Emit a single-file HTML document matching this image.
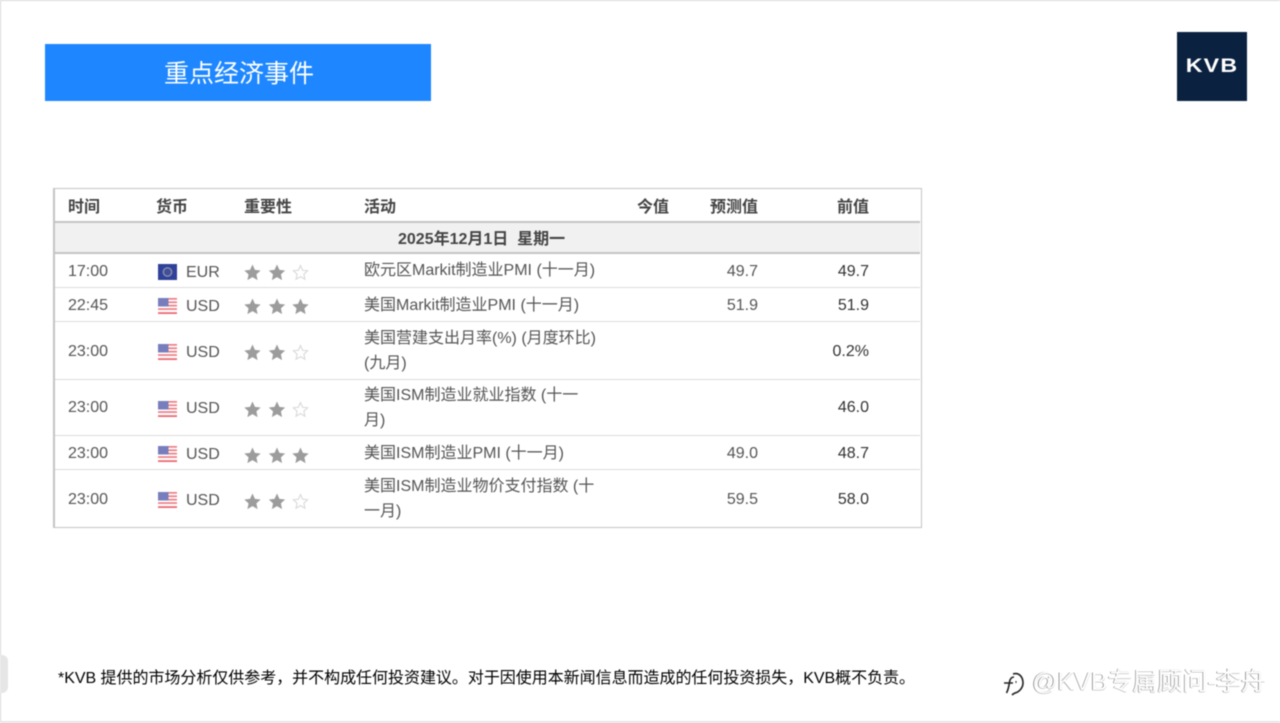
<!DOCTYPE html>
<html lang="zh"><head><meta charset="utf-8"><style>
html,body{margin:0;padding:0;background:#fff}
#p{position:relative;width:1280px;height:723px;overflow:hidden;background:#fff;font-family:"Liberation Sans","Noto Sans CJK SC",sans-serif;font-size:16px;color:#555;filter:blur(.4px)}
#p div,#p svg{position:absolute}
.t{white-space:nowrap;line-height:24px;height:24px}
.h{font-weight:bold;color:#444}
.r{text-align:right}
.l{left:55px;width:865px;height:1px;background:#dcdcdc}
.d{color:#333}
</style></head><body><div id="p">
<div style="left:0;top:0;width:1280px;height:1px;background:#d8d8d8"></div>
<div style="left:0;top:0;width:1px;height:721px;background:#d8d8d8"></div>
<div style="left:0;top:721px;width:1280px;height:2px;background:#e4e4e4"></div>
<div style="left:0;top:655px;width:8px;height:38px;background:#e6e6e6;border-radius:0 6px 6px 0"></div>

<div style="left:45px;top:44px;width:386px;height:57px;background:#1e87ff"></div>
<div class="t" style="left:164px;top:59px;height:30px;line-height:30px;font-size:25px;color:#fff">重点经济事件</div>

<div style="left:1177px;top:32px;width:70px;height:69px;background:#0b2140"></div>
<div class="t" style="left:1177px;top:55px;width:70px;text-align:center;font-size:19px;font-weight:bold;color:#fff;letter-spacing:1px;transform:scaleX(1.22)">KVB</div>

<div style="left:53px;top:188px;width:866px;height:338px;border:1px solid #c4c4c4;border-left-width:2px"></div>
<div style="left:55px;top:221px;width:865px;height:33px;background:#f1f1f1;box-sizing:border-box;border-top:2px solid #c4c4c4;border-bottom:2px solid #c4c4c4"></div>
<div class="l" style="top:287px"></div>
<div class="l" style="top:321px"></div>
<div class="l" style="top:379px"></div>
<div class="l" style="top:435px"></div>
<div class="l" style="top:469px"></div>

<div class="t h" style="left:68px;top:196px">时间</div>
<div class="t h" style="left:156px;top:196px">货币</div>
<div class="t h" style="left:244px;top:196px">重要性</div>
<div class="t h" style="left:364px;top:196px">活动</div>
<div class="t h" style="left:637px;top:196px">今值</div>
<div class="t h" style="left:710px;top:196px">预测值</div>
<div class="t h" style="left:837px;top:196px">前值</div>
<div class="t h" style="left:398px;top:228px">2025年12月1日&nbsp; 星期一</div>

<svg width="0" height="0" style="position:absolute"><defs>
<g id="us"><rect width="19" height="16" fill="#fff"/><rect width="19" height="1.7" y="0" fill="#ec7f86"/><rect width="19" height="1.7" y="3.4" fill="#ec7f86"/><rect width="19" height="1.7" y="6.8" fill="#ec7f86"/><rect width="19" height="1.7" y="10.2" fill="#ec7f86"/><rect width="19" height="1.8" y="14.2" fill="#ea6a72"/><rect width="10.500" height="8.500" fill="#787ebc"/></g>
<g id="eu"><rect width="19" height="16" fill="#2f4199"/><circle cx="9.5" cy="8" r="4.2" fill="#3f4f9c" stroke="#8c90a8" stroke-width="1.4"/></g>
<path id="f" transform="scale(1.06)" d="M8 0.5l2.3 5 5.4.6-4 3.7 1.1 5.4L8 12.4l-4.8 2.8 1.1-5.4-4-3.7 5.4-.6z" fill="#9c9c9c"/>
<path id="e" transform="scale(1.06)" d="M8 1.5l2 4.4 4.7.5-3.5 3.2 1 4.7L8 11.9l-4.2 2.4 1-4.7-3.5-3.2 4.7-.5z" fill="#fff" stroke="#d8d8d8"/>
</defs></svg>

<div class="t" style="left:68px;top:260px">17:00</div>
<svg style="left:158px;top:264px" width="19" height="16"><use href="#eu"/></svg>
<div class="t" style="left:186px;top:261px">EUR</div>
<svg style="left:244px;top:264px" width="66" height="17"><use href="#f"/><use href="#f" x="24.500"/><use href="#e" x="48"/></svg>
<div class="t" style="left:364px;top:259px">欧元区Markit制造业PMI (十一月)</div>
<div class="t r" style="left:700px;top:260px;width:58px">49.7</div>
<div class="t r d" style="left:810px;top:260px;width:59px">49.7</div>

<div class="t" style="left:68px;top:294px">22:45</div>
<svg style="left:158px;top:298px" width="19" height="16"><use href="#us"/></svg>
<div class="t" style="left:186px;top:295px">USD</div>
<svg style="left:244px;top:298px" width="66" height="17"><use href="#f"/><use href="#f" x="24.500"/><use href="#f" x="48"/></svg>
<div class="t" style="left:364px;top:294px">美国Markit制造业PMI (十一月)</div>
<div class="t r" style="left:700px;top:294px;width:58px">51.9</div>
<div class="t r d" style="left:810px;top:294px;width:59px">51.9</div>

<div class="t" style="left:68px;top:340px">23:00</div>
<svg style="left:158px;top:344px" width="19" height="16"><use href="#us"/></svg>
<div class="t" style="left:186px;top:341px">USD</div>
<svg style="left:244px;top:344px" width="66" height="17"><use href="#f"/><use href="#f" x="24.500"/><use href="#e" x="48"/></svg>
<div class="t" style="left:364px;top:327px">美国营建支出月率(%) (月度环比)</div>
<div class="t" style="left:364px;top:352px">(九月)</div>
<div class="t r d" style="left:810px;top:340px;width:59px">0.2%</div>

<div class="t" style="left:68px;top:396px">23:00</div>
<svg style="left:158px;top:401px" width="19" height="16"><use href="#us"/></svg>
<div class="t" style="left:186px;top:397px">USD</div>
<svg style="left:244px;top:401px" width="66" height="17"><use href="#f"/><use href="#f" x="24.500"/><use href="#e" x="48"/></svg>
<div class="t" style="left:364px;top:384px">美国ISM制造业就业指数 (十一</div>
<div class="t" style="left:364px;top:409px">月)</div>
<div class="t r d" style="left:810px;top:396px;width:59px">46.0</div>

<div class="t" style="left:68px;top:442px">23:00</div>
<svg style="left:158px;top:446px" width="19" height="16"><use href="#us"/></svg>
<div class="t" style="left:186px;top:443px">USD</div>
<svg style="left:244px;top:447px" width="66" height="17"><use href="#f"/><use href="#f" x="24.500"/><use href="#f" x="48"/></svg>
<div class="t" style="left:364px;top:442px">美国ISM制造业PMI (十一月)</div>
<div class="t r" style="left:700px;top:442px;width:58px">49.0</div>
<div class="t r d" style="left:810px;top:442px;width:59px">48.7</div>

<div class="t" style="left:68px;top:488px">23:00</div>
<svg style="left:158px;top:492px" width="19" height="16"><use href="#us"/></svg>
<div class="t" style="left:186px;top:489px">USD</div>
<svg style="left:244px;top:493px" width="66" height="17"><use href="#f"/><use href="#f" x="24.500"/><use href="#e" x="48"/></svg>
<div class="t" style="left:364px;top:475px">美国ISM制造业物价支付指数 (十</div>
<div class="t" style="left:364px;top:500px">一月)</div>
<div class="t r" style="left:700px;top:488px;width:58px">59.5</div>
<div class="t r d" style="left:810px;top:488px;width:59px">58.0</div>

<div class="t" style="left:58px;top:667px;color:#000;letter-spacing:-.03px">*KVB 提供的市场分析仅供参考，并不构成任何投资建议。对于因使用本新闻信息而造成的任何投资损失，KVB概不负责。</div>

<svg style="left:1002px;top:672px" width="24" height="26" fill="none" stroke="#222" stroke-width="1.6"><path d="M11 2c6-2 10 3 10 9 0 5-4 9-8 10-1 .5-2 1-3 2"/><path d="M12 5c-3 0-4 2-4.500 5-.5 4-1.500 8-3 11M2 11h9"/><path d="M14 9v2" stroke-width="1"/></svg>
<div class="t" style="left:1032px;top:667px;height:30px;line-height:30px;font-size:25px;color:#fff;text-shadow:-.7px 0 0 #777,0 .7px 0 #aaa">@KVB专属顾问-李舟</div>
</div></body></html>
